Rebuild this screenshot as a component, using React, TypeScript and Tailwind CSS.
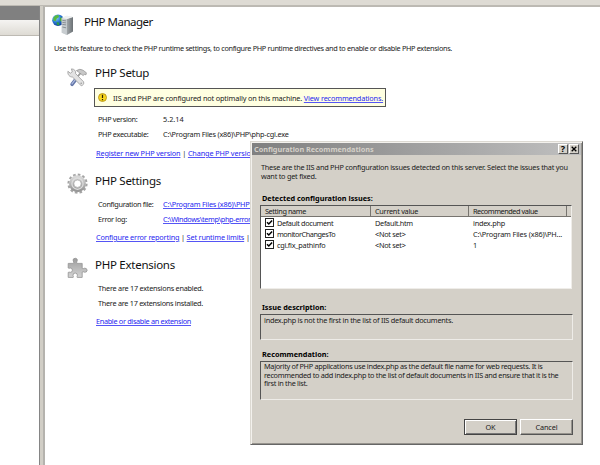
import React from "react";

function Link({ children, className = "" }: { children: React.ReactNode; className?: string }) {
  return <a className={`text-[#2626f0] underline decoration-[#5555f5] decoration-1 underline-offset-1 ${className}`}>{children}</a>;
}

function ServerIcon() {
  return (
    <svg width="22" height="22" viewBox="0 0 22 22" className="shrink-0">
      <defs>
        <radialGradient id="globe" cx="0.35" cy="0.3" r="0.8">
          <stop offset="0" stopColor="#8fd0fa" />
          <stop offset="0.5" stopColor="#2878d4" />
          <stop offset="1" stopColor="#0b2f8a" />
        </radialGradient>
        <linearGradient id="tower" x1="0" x2="1">
          <stop offset="0" stopColor="#a0a5a8" />
          <stop offset="1" stopColor="#6b7175" />
        </linearGradient>
      </defs>
      <circle cx="6" cy="6.2" r="5.8" fill="url(#globe)" />
      <path d="M1.5 3.5Q4 .4 6.5 1.2L7 3 4.6 4.8 3.8 7.2 1.3 6.4Z" fill="#58ba3f" />
      <path d="M8 3.4l2.6.3L11.5 6l-1.7 2.2L8 6.2Z" fill="#49aa3a" />
      <path d="M4.5 8l3 .8L7 11.4 5.2 11Z" fill="#2e9c48" />
      <path d="M9.7 4.1l5.2-2.3L21 3v14.6l-6.3 3.5-5-2.3Z" fill="#dfe3e5" />
      <path d="M9.7 4.1l5.2.9v16.1l-5.2-2.3Z" fill="#c8cdd0" />
      <path d="M14.9 5L21 3v14.6l-6.1 3.5Z" fill="url(#tower)" />
      <path d="M10.4 6.4l3.7.5M10.4 8.4l3.7.5M10.4 10.4l3.7.5M10.4 13l3.7.8" stroke="#788086" strokeWidth=".8" />
      <path d="M9.7 4.1l5.2-2.3L21 3l-6.1 2Z" fill="#eef0f1" />
    </svg>
  );
}

function ToolsIcon() {
  return (
    <svg width="20" height="19" viewBox="0 0 20 19" className="shrink-0">
      <path d="M9.4 10.6L5 16.4" stroke="#6376a8" strokeWidth="3.4" strokeLinecap="round" />
      <path d="M9 10.6L5 15.8" stroke="#aebbe0" strokeWidth="1.1" strokeLinecap="round" />
      <path d="M9.4 9.8l4.2-4.6" stroke="#9c9c9c" strokeWidth="1.8" />
      <path d="M9.4 2.6Q13 .2 16 2.2l3.4 2.6-.4 2-1.6-.4-1.3 1.2-3.8-3Z" fill="#c8c8c8" stroke="#909090" strokeWidth=".7" />
      <path d="M.9 3.3l2.5 1.9 1.9-1.4L4.4.9C7.2.8 9.2 3 8.6 5.6l8 8.2q.8 3.2-2.4 3.9L5.4 9C2.6 9.1.4 6.6.9 3.3Z" fill="#e2e2e2" stroke="#999" strokeWidth=".8" />
      <circle cx="14.2" cy="15.3" r=".8" fill="#999" />
    </svg>
  );
}

function GearIcon() {
  return (
    <svg width="21" height="21" viewBox="0 0 21 21" className="shrink-0">
      <defs>
        <linearGradient id="gear" x1="0" y1="0" x2="0" y2="1">
          <stop offset="0" stopColor="#d6d6d6" />
          <stop offset="1" stopColor="#989898" />
        </linearGradient>
      </defs>
      <circle cx="10.5" cy="10.7" r="9" fill="none" stroke="#a4a4a4" strokeWidth="2.2" strokeDasharray="2.6 2.112" />
      <circle cx="10.5" cy="10.7" r="6" fill="none" stroke="url(#gear)" strokeWidth="5" />
      <circle cx="10.5" cy="10.7" r="5.6" fill="none" stroke="#dedede" strokeWidth="1.2" />
      <circle cx="10.5" cy="10.7" r="3.7" fill="#fff" stroke="#999" strokeWidth=".6" />
    </svg>
  );
}

function PuzzleIcon() {
  return (
    <svg width="21" height="21" viewBox="0 0 21 21" className="shrink-0">
      <defs>
        <linearGradient id="puzzle" x1="0" y1="0" x2="0" y2="1">
          <stop offset="0" stopColor="#9c9c9c" />
          <stop offset="1" stopColor="#d4d4d4" />
        </linearGradient>
      </defs>
      <path
        d="M1.2 6.4H6.6Q7.2 5 6.2 3.9 5.4 1.6 8.2 1.2 11 1.6 10.2 3.9 9.2 5 9.8 6.4H15.2V11.4Q16 12.2 17.2 11.2 19.8 10.8 20.2 13.2 19.8 15.8 17.2 15.2 16 14.2 15.2 15V20.4H10.2Q9.8 19.4 10.4 18.4 10.6 16.2 8.2 16 5.8 16.2 6 18.4 6.6 19.4 6.2 20.4H1.2V15.4Q2.2 14.8 3.2 15.4 5.4 15.2 5.4 13.2 5.4 11 3.2 11 2.2 11.6 1.2 11Z"
        fill="url(#puzzle)"
        stroke="#939393"
        strokeWidth=".8"
      />
    </svg>
  );
}

function WarningIcon() {
  return (
    <svg width="9" height="9" viewBox="0 0 9 9" className="shrink-0">
      <circle cx="4.5" cy="4.5" r="4" fill="#f7d51d" stroke="#b08c10" strokeWidth=".8" />
      <path d="M4.5 1.8v3.1M4.5 6v1.2" stroke="#2b2300" strokeWidth="1.2" />
    </svg>
  );
}

function Heading({ icon, title }: { icon: React.ReactNode; title: string }) {
  return (
    <div className="flex h-[21px]">
      <div className="w-[28px]">{icon}</div>
      <h2 className="text-[11.5px] leading-[16px] tracking-[-0.27px] text-[#111]">{title}</h2>
    </div>
  );
}

function Field({ label, children, className = "" }: { label: string; children: React.ReactNode; className?: string }) {
  return (
    <div className={`flex h-[15px] pl-[31px] ${className}`}>
      <span className="w-[65px] tracking-[-0.32px]">{label}</span>
      <span>{children}</span>
    </div>
  );
}

function SidePane() {
  return (
    <div className="flex w-[40px] shrink-0 flex-col border-r border-[#858585] bg-white">
      <div className="h-[14px] bg-[#808080]" />
      <div className="h-[16px] border-b border-[#bdbab3] bg-linear-to-b from-[#f5f4f2] to-[#dedbd4]" />
    </div>
  );
}

function Check() {
  return (
    <span className="flex h-[9px] w-[9px] items-center justify-center border border-[#222] bg-white">
      <svg width="7" height="7" viewBox="0 0 7 7">
        <path d="M1 3.2L2.8 5 6.1 1.4" fill="none" stroke="#000" strokeWidth="1.5" />
      </svg>
    </span>
  );
}

const issues = [
  { name: "Default document", current: "Default.htm", value: "index.php", nameClass: "tracking-[-0.36px]", valueClass: "tracking-[-0.25px]" },
  { name: "monitorChangesTo", current: "<Not set>", value: "C:\\Program Files (x86)\\PH...", nameClass: "tracking-[-0.45px]", valueClass: "tracking-[-0.15px]" },
  { name: "cgi.fix_pathinfo", current: "<Not set>", value: "1", nameClass: "tracking-[-0.25px]", valueClass: "" },
];

function HeaderCell({ children, className = "" }: { children?: React.ReactNode; className?: string }) {
  return <div className={`h-[11px] border-b border-[#77746f] bg-[#d4d0c8] pl-[4px] ${className}`}>{children}</div>;
}

function IssueList() {
  return (
    <div className="h-[84px] w-[312px] border border-t-[#555] border-r-[#efede9] border-b-[#efede9] border-l-[#555] bg-white">
      <div className="flex">
        <HeaderCell className="w-[110px] border-r border-r-[#77746f] tracking-[-0.4px]">Setting name</HeaderCell>
        <HeaderCell className="w-[98px] border-r border-r-[#77746f] tracking-[-0.25px]">Current value</HeaderCell>
        <HeaderCell className="w-[98px] border-r border-r-[#77746f] tracking-[-0.44px]">Recommended value</HeaderCell>
        <HeaderCell className="flex-1" />
      </div>
      {issues.map((i) => (
        <div key={i.name} className="flex h-[11px] items-center">
          <div className="w-[16px] pl-[4px]"><Check /></div>
          <div className={`w-[98px] ${i.nameClass}`}>{i.name}</div>
          <div className="w-[98px] tracking-[-0.28px]">{i.current}</div>
          <div className={`whitespace-nowrap ${i.valueClass}`}>{i.value}</div>
        </div>
      ))}
    </div>
  );
}

function CaptionButton({ children }: { children: React.ReactNode }) {
  return (
    <span className="flex h-[10px] w-[10px] items-center justify-center border border-t-white border-r-[#555] border-b-[#555] border-l-white bg-[#d4d0c8]">
      {children}
    </span>
  );
}

function Dialog() {
  return (
    <div className="absolute top-[141px] left-[250px] flex h-[304px] w-[333px] flex-col border border-t-[#dcd9d2] border-r-[#666] border-b-[#666] border-l-[#dcd9d2] bg-[#d4d0c8] p-px shadow-[inset_1px_1px_0_#f3f1ed,inset_-1px_-1px_0_#97948e]">
      <div className="flex h-[12px] shrink-0 items-center bg-linear-to-r from-[#808080] to-[#c0c0c0] pr-[2px] pl-[2px]">
        <span className="flex-1 font-bold tracking-[-0.03px] text-[#d4d0c8]">Configuration Recommendations</span>
        <CaptionButton>
          <span className="text-[9px] leading-[8px] font-bold text-black">?</span>
        </CaptionButton>
        <span className="w-[1px]" />
        <CaptionButton>
          <svg width="6" height="6" viewBox="0 0 6 6">
            <path d="M.7.7l4.6 4.6M5.3.7L.7 5.3" stroke="#000" strokeWidth="1.3" />
          </svg>
        </CaptionButton>
      </div>
      <div className="flex flex-col pl-[8px]">
        <p className="mt-[8px] pl-px leading-[9px] tracking-[-0.23px] whitespace-nowrap">
          These are the IIS and PHP configuration issues detected on this server. Select the issues that you
          <br />
          want to get fixed.
        </p>
        <h3 className="mt-[12px] h-[12px] pl-[2px] font-bold text-black">Detected configuration issues:</h3>
        <IssueList />
        <h3 className="mt-[13px] h-[12px] pl-[2px] font-bold text-black">Issue description:</h3>
        <div className="h-[26px] w-[313px] border border-t-[#555] border-r-[#eeece8] border-b-[#eeece8] border-l-[#555] pl-[3px] tracking-[-0.25px]">
          index.php is not the first in the list of IIS default documents.
        </div>
        <h3 className="mt-[9px] h-[12px] pl-[2px] font-bold text-black">Recommendation:</h3>
        <div className="h-[39px] w-[313px] border border-t-[#555] border-r-[#eeece8] border-b-[#eeece8] border-l-[#555] pl-[3px] leading-[8.6px] tracking-[-0.29px] whitespace-nowrap">
          Majority of PHP applications use index.php as the default file name for web requests. It is
          <br />
          recommended to add index.php to the list of default documents in IIS and ensure that it is the
          <br />
          first in the list.
        </div>
        <div className="mt-[19px] flex gap-[3px] pl-[204px] leading-[13px]">
          <button className="h-[16px] w-[53px] border border-[#444] shadow-[inset_1px_1px_0_#fff,inset_-1px_-1px_0_#777]">OK</button>
          <button className="h-[16px] w-[53px] border border-t-white border-r-[#555] border-b-[#555] border-l-white tracking-[-0.15px] shadow-[inset_-1px_-1px_0_#96938d]">Cancel</button>
        </div>
      </div>
    </div>
  );
}

export default function App() {
  return (
    <div className="relative flex h-[465px] w-[600px] flex-col overflow-hidden bg-[#dedbd4] font-['Noto_Sans',sans-serif] text-[7.3px] leading-[10px] text-[#1a1a1a]">
      <div className="h-[6px] shrink-0 border-b border-[#bdbab3] bg-[#dedbd4]" />
      <div className="flex min-h-0 flex-1">
        <SidePane />
        <div className="w-[3px] shrink-0 bg-[#d1cec6]" />
        <main className="flex flex-1 flex-col border-t border-l-2 border-t-[#bcb9b3] border-l-[#b5b3ae] bg-white pl-[7px] whitespace-nowrap">
          <div className="mt-[7px] flex h-[29px]">
            <div className="w-[32px]"><ServerIcon /></div>
            <h1 className="text-[11.5px] leading-[16px] tracking-[-0.48px] text-[#111]">PHP Manager</h1>
          </div>
          <p className="pl-[2px] tracking-[-0.325px]">Use this feature to check the PHP runtime settings, to configure PHP runtime directives and to enable or disable PHP extensions.</p>
          <section className="mt-[12px] pl-[15px]">
            <Heading icon={<div className="mt-[3px]"><ToolsIcon /></div>} title="PHP Setup" />
            <div className="mt-[2px] ml-[27px] flex h-[19px] w-[292px] items-center border border-[#555] bg-[#ffffe1] pl-[3px]">
              <WarningIcon />
              <span className="ml-[6px] tracking-[-0.155px]">IIS and PHP are configured not optimally on this machine. <Link>View recommendations.</Link></span>
            </div>
            <div className="h-[7px]" />
            <Field label="PHP version:">5.2.14</Field>
            <Field label="PHP executable:" className="tracking-[-0.22px]">C:\Program Files (x86)\PHP\php-cgi.exe</Field>
            <div className="mt-[4px] pl-[29px] tracking-[-0.13px]"><Link>Register new PHP version</Link> | <Link>Change PHP version</Link></div>
          </section>
          <section className="mt-[15px] pl-[15px]">
            <Heading icon={<GearIcon />} title="PHP Settings" />
            <div className="h-[5px]" />
            <Field label="Configuration file:" className="tracking-[-0.2px]"><Link>C:\Program Files (x86)\PHP\php.ini</Link></Field>
            <Field label="Error log:" className="tracking-[-0.38px]"><Link>C:\Windows\temp\php-errors.log</Link></Field>
            <div className="mt-[3px] pl-[29px] tracking-[-0.17px]"><Link>Configure error reporting</Link> | <Link>Set runtime limits</Link> | <Link>Manage all settings</Link></div>
          </section>
          <section className="mt-[15px] pl-[15px]">
            <Heading icon={<PuzzleIcon />} title="PHP Extensions" />
            <div className="h-[5px]" />
            <p className="h-[15px] pl-[31px] tracking-[-0.25px]">There are 17 extensions enabled.</p>
            <p className="h-[15px] pl-[31px] tracking-[-0.28px]">There are 17 extensions installed.</p>
            <p className="mt-[3px] pl-[29px] tracking-[-0.32px]"><Link>Enable or disable an extension</Link></p>
          </section>
        </main>
      </div>
      <Dialog />
    </div>
  );
}
